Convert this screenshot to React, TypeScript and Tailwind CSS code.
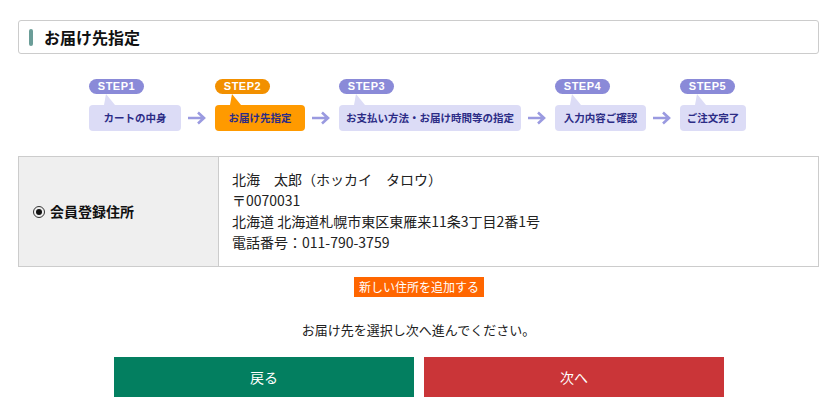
const jp = "font-['Meiryo','Noto_Sans_CJK_JP','Noto_Sans',sans-serif]";

const steps = [
  { no: "STEP1", label: "カートの中身", w: "w-[92px]", on: false },
  { no: "STEP2", label: "お届け先指定", w: "w-[90px]", on: true },
  { no: "STEP3", label: "お支払い方法・お届け時間等の指定", w: "w-[182px]", on: false },
  { no: "STEP4", label: "入力内容ご確認", w: "w-[91px]", on: false },
  { no: "STEP5", label: "ご注文完了", w: "w-[66px]", on: false },
];

function Arrow() {
  return (
    <svg width="20" height="14" viewBox="0 0 20 14" className="ml-[6px] mr-[8px] mt-[32px]">
      <path d="M1 7h16M11 1.5l6 5.5-6 5.5" fill="none" stroke="#9a9ae0" strokeWidth="2.6" />
    </svg>
  );
}

function Step({ no, label, w, on }: (typeof steps)[number]) {
  const pill = on ? "bg-[#f29000]" : "bg-[#8a8ad8]";
  const box = on ? "bg-[#ff9a00]" : "bg-[#dcdcf6]";
  const tri = on ? "#ff9a00" : "#dcdcf6";
  return (
    <div className={`flex flex-col items-start ${w}`}>
      <div
        className={`${pill} w-[55px] h-[15px] rounded-full flex items-center justify-center text-white text-[11px] font-bold tracking-[0.5px] font-['Liberation_Sans',Arial,sans-serif] leading-none`}
      >
        {no}
      </div>
      <svg width="20" height="11" viewBox="0 0 20 11" className="ml-[12px]">
        <polygon points="5,0 3,11 14,11" fill={tri} />
      </svg>
      <div
        className={`${box} w-full h-[26px] rounded-[4px] flex items-center justify-center text-[#2c2c86] text-[10.5px] font-bold whitespace-nowrap ${jp}`}
      >
        {label}
      </div>
    </div>
  );
}

export default function App() {
  return (
    <div className={`w-[835px] h-[418px] bg-white pt-[20px] pl-[18px] pr-[16px] ${jp} text-[#222]`}>
      <div className="h-[34px] border border-[#cccccc] rounded-[3px] flex items-center pl-[10px]">
        <span className="w-[4px] h-[17px] rounded-[2px] bg-[#6b9d98]" />
        <span className="ml-[11px] text-[16px] font-bold text-[#111]">お届け先指定</span>
      </div>

      <div className="flex justify-center mt-[25px] pr-[2px]">
        {steps.map((s, i) => (
          <div key={s.no} className="flex items-start">
            {i > 0 && <Arrow />}
            <Step {...s} />
          </div>
        ))}
      </div>

      <div className="mt-[25px] h-[111px] border border-[#cccccc] flex">
        <div className="w-[200px] bg-[#efefef] border-r border-[#cccccc] flex items-center pl-[14px]">
          <span className="w-[12px] h-[12px] rounded-full border border-[#333] flex items-center justify-center">
            <span className="w-[6px] h-[6px] rounded-full bg-[#111]" />
          </span>
          <span className="ml-[5px] text-[14px] font-bold text-[#111]">会員登録住所</span>
        </div>
        <div className="flex-1 pl-[13px] pt-[12px] text-[14px] leading-[21px] text-[#222]">
          <div>北海　太郎（ホッカイ　タロウ）</div>
          <div>〒0070031</div>
          <div>北海道 北海道札幌市東区東雁来11条3丁目2番1号</div>
          <div>電話番号：011-790-3759</div>
        </div>
      </div>

      <div className="flex justify-center mt-[10px]">
        <button className="w-[130px] h-[20px] bg-[#ff6600] text-white text-[12px] leading-none ml-[1px]">
          新しい住所を追加する
        </button>
      </div>

      <p className="text-center text-[13px] mt-[24px] leading-[18px] text-[#222]">
        お届け先を選択し次へ進んでください。
      </p>

      <div className="flex justify-center gap-[10px] mt-[18px] ml-[1px]">
        <button className="w-[300px] h-[40px] bg-[#037f60] text-white text-[14px]">戻る</button>
        <button className="w-[300px] h-[40px] bg-[#ca3538] text-white text-[14px]">次へ</button>
      </div>
    </div>
  );
}
